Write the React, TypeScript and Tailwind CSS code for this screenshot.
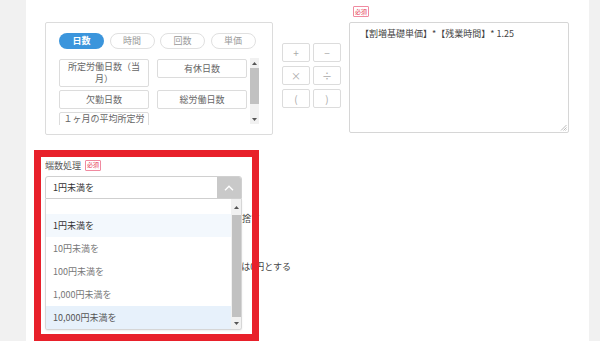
import React from "react";

const Badge = () => (
  <span className="inline-flex items-center justify-center w-[16px] h-[11px] border border-[#f08aa0] rounded-[1px] text-[6px] leading-none text-[#e5304f] bg-white">
    必須
  </span>
);

const UpArrow = () => (
  <svg width="5" height="3" viewBox="0 0 5 3"><path d="M0 3 L2.5 0 L5 3 Z" fill="#555" /></svg>
);
const DownArrow = () => (
  <svg width="5" height="3" viewBox="0 0 5 3"><path d="M0 0 L2.5 3 L5 0 Z" fill="#555" /></svg>
);

export default function App() {
  const pills = ["日数", "時間", "回数", "単価"];
  const ops = ["+", "−", "×", "÷", "(", ")"];
  const options = ["1円未満を", "10円未満を", "100円未満を", "1,000円未満を", "10,000円未満を"];
  return (
    <div className="relative w-[600px] h-[341px] overflow-hidden bg-white flex font-['Noto_Sans_CJK_JP',sans-serif] text-[#555]">
      <div className="w-[26px] shrink-0 bg-[#f1f1f1]" />
      <div className="flex-1 flex flex-col">
        {/* top section */}
        <div className="flex items-start h-[135px]">
          {/* selector panel */}
          <div className="ml-[19px] mt-[22px] w-[228px] h-[113px] border border-[#dcdcdc] rounded-[2px] pl-[13px] pt-[10px]">
            <div className="flex gap-[5.5px]">
              {pills.map((p, i) => (
                <div
                  key={p}
                  className={
                    i === 0
                      ? "w-[45px] h-[16px] rounded-full bg-[#3b95dc] text-white text-[9px] font-bold flex items-center justify-center"
                      : "w-[45px] h-[16px] rounded-full border border-[#e0e0e0] text-[#999] text-[9px] flex items-center justify-center"
                  }
                >
                  {p}
                </div>
              ))}
            </div>
            <div className="mt-[9px] flex h-[67px] w-[200px]">
              <div className="w-[190px] h-[67px] overflow-hidden">
                <div className="grid grid-cols-[90px_90px] gap-x-[8px] gap-y-[3px] items-start pt-[1px]">
                  <div className="h-[28px] border border-[#dcdcdc] rounded-[2px] text-[9px] leading-[12px] text-[#666] text-center flex items-center justify-center">
                    <span>所定労働日数（当<br />月）</span>
                  </div>
                  <div className="h-[19px] border border-[#dcdcdc] rounded-[2px] text-[9px] text-[#666] flex items-center justify-center">有休日数</div>
                  <div className="h-[19px] border border-[#dcdcdc] rounded-[2px] text-[9px] text-[#666] flex items-center justify-center">欠勤日数</div>
                  <div className="h-[19px] border border-[#dcdcdc] rounded-[2px] text-[9px] text-[#666] flex items-center justify-center">総労働日数</div>
                  <div className="h-[28px] border border-[#dcdcdc] rounded-[2px] text-[9px] leading-[12px] text-[#666] text-center pt-[0px]">
                    <span>１ヶ月の平均所定労<br />働日数</span>
                  </div>
                </div>
              </div>
              <div className="ml-[1px] w-[9px] h-[66px] bg-[#f1f1f1] flex flex-col items-center">
                <div className="h-[10px] flex items-center"><UpArrow /></div>
                <div className="w-[9px] h-[36px] bg-[#c1c1c1]" />
                <div className="flex-1" />
                <div className="h-[10px] flex items-center"><DownArrow /></div>
              </div>
            </div>
          </div>
          {/* operators */}
          <div className="ml-[9px] mt-[43px] grid grid-cols-[28px_28px] gap-x-[3px] gap-y-[4px]">
            {ops.map((o) => (
              <div key={o} className="h-[19px] border border-[#dcdcdc] rounded-[2px] text-[#aaa] text-[10px] flex items-center justify-center">
                {o}
              </div>
            ))}
          </div>
          {/* formula */}
          <div className="ml-[8px] pt-[6px] flex flex-col">
            <div className="ml-[4px] h-[11px] flex"><Badge /></div>
            <div className="relative mt-[5px] w-[220px] h-[111px] border border-[#d6d6d6] rounded-[2px] pl-[10px] pt-[3px] text-[9px] leading-[16px] text-[#444]">
              【割増基礎単価】*【残業時間】* 1.25
              <svg className="absolute right-[1px] bottom-[1px]" width="7" height="7" viewBox="0 0 7 7">
                <path d="M6.5 1 L1 6.5 M6.5 3.5 L3.5 6.5 M6.5 5.5 L5.5 6.5" stroke="#aaa" strokeWidth="0.8" />
              </svg>
            </div>
          </div>
        </div>
        {/* lower section */}
        <div className="mt-[24px] ml-[19px] flex flex-col">
          <div className="flex items-center h-[12px] gap-[4px]">
            <span className="text-[9px] leading-none text-[#555]">端数処理</span>
            <Badge />
          </div>
          <div className="relative mt-[5px] w-[197px]">
            <div className="h-[23px] border border-[#d0d0d0] rounded-t-[3px] flex items-center justify-between overflow-hidden">
              <span className="pl-[7px] text-[9px] text-[#333]">1円未満を</span>
              <div className="w-[24px] h-[23px] bg-[#c9c9c9] flex items-center justify-center">
                <svg width="10" height="6" viewBox="0 0 10 6"><path d="M1 5.2 L5 1.2 L9 5.2" stroke="#fff" strokeWidth="1.4" fill="none" /></svg>
              </div>
            </div>
            <div className="absolute left-0 top-full z-10 w-[197px] h-[131px] bg-white border border-[#d6d6d6] border-t-0 rounded-b-[3px] flex overflow-hidden shadow-[0_1px_2px_rgba(0,0,0,0.08)]">
              <div className="flex-1 flex flex-col">
                <div className="h-[15px]" />
                {options.map((o, i) => (
                  <div
                    key={o}
                    className={
                      "h-[23px] pl-[7px] flex items-center text-[9px] " +
                      (i === 0 ? "bg-[#f3f8fd] text-[#333]" : i === 4 ? "bg-[#e7f1fb] text-[#555]" : "text-[#777]")
                    }
                  >
                    {o}
                  </div>
                ))}
              </div>
              <div className="w-[10px] bg-[#f1f1f1] flex flex-col items-center">
                <div className="h-[16px] flex items-center"><UpArrow /></div>
                <div className="w-[9px] h-[102px] bg-[#c1c1c1]" />
                <div className="flex-1 flex items-center"><DownArrow /></div>
              </div>
            </div>
          </div>
          <div className="mt-[13px] w-[215px] h-[14px] text-right text-[9px] leading-[14px] text-[#444]">端数を切り捨て</div>
          <div className="mt-[34px] w-[246px] h-[14px] text-right text-[9px] leading-[14px] text-[#444]">1円未満の端数は0円とする</div>
        </div>
      </div>
      <div className="w-[11px] shrink-0 bg-[#f1f1f1]" />
      {/* annotation */}
      <div className="absolute left-[34px] top-[150px] w-[225px] h-[191px] border-[7px] border-[#e8202a] z-20 pointer-events-none" />
    </div>
  );
}
